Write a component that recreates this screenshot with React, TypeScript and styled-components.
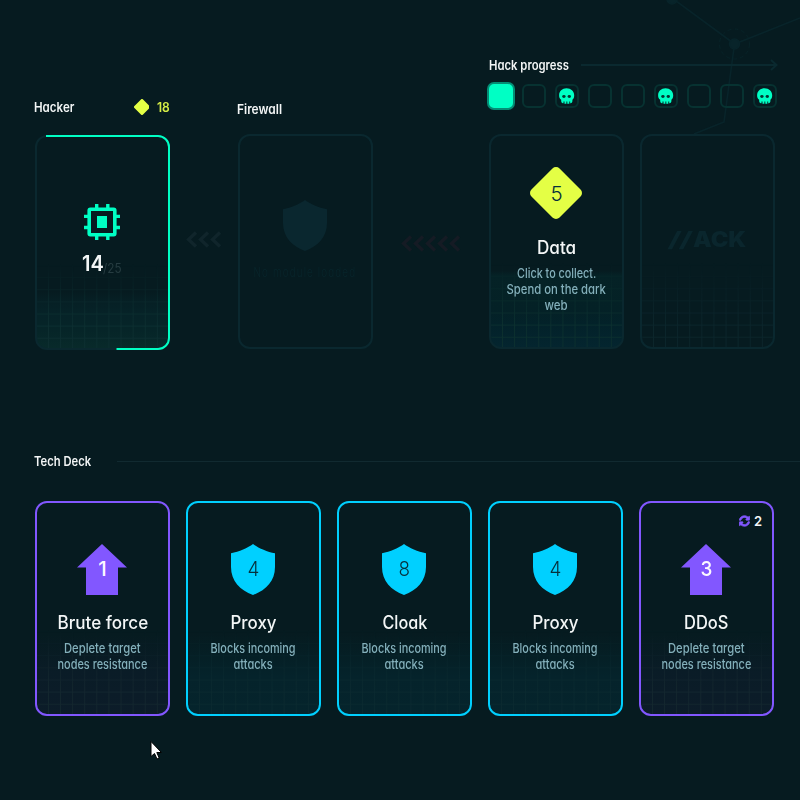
import React, { useLayoutEffect, useRef, useState } from "react";
import styled, { createGlobalStyle, css } from "styled-components";

const color = {
  bg: "#061b20",
  line: "#0a282f",
  green: "#00ffc4",
  violet: "#8257ff",
  cyan: "#00d0ff",
  lime: "#e4ff45",
  text: "#f3f6f6",
  muted: "#84b0bb",
};

const GlobalStyle = createGlobalStyle`
  *, *::before, *::after { box-sizing: border-box; }
  body { margin: 0; background: ${color.bg}; overflow: hidden; }
`;

const Screen = styled.main`
  position: relative;
  width: 800px;
  height: 800px;
  overflow: hidden;
  background: ${color.bg};
  color: ${color.text};
  font-family: Inter, Roboto, sans-serif;
  font-feature-settings: "cv11" 1;
  font-weight: 600;
  font-size: 13px;
  line-height: 16px;
`;

/* ---------- condensed text ---------- */

const Line = styled.span<{ $origin: string }>`
  display: inline-block;
  flex: none;
  white-space: nowrap;
  transform-origin: ${(p) => p.$origin} center;
`;

function Fit({ w, origin = "left", children }: { w: number; origin?: string; children: React.ReactNode }) {
  const ref = useRef<HTMLSpanElement>(null);
  const [scale, setScale] = useState(1);
  useLayoutEffect(() => {
    if (ref.current) setScale(w / ref.current.offsetWidth);
  }, [w]);
  return (
    <Line ref={ref} $origin={origin} style={{ transform: `scaleX(${scale})` }}>
      {children}
    </Line>
  );
}

/* ---------- layout ---------- */

const Network = styled.svg`
  position: absolute;
  top: 0;
  right: 0;
`;

const Arena = styled.section`
  position: relative;
  display: flex;
  align-items: flex-end;
  height: 350px;
  padding-left: 35px;
`;

const Slot = styled.div<{ $lift?: number }>`
  display: flex;
  flex-direction: column;
  width: 135px;
  flex: none;
  margin-bottom: ${(p) => p.$lift ?? 0}px;
`;

const SlotHeader = styled.div<{ $gap: number }>`
  display: flex;
  align-items: center;
  height: 16px;
  margin-left: -1px;
  margin-bottom: ${(p) => p.$gap}px;
`;

const Credits = styled.div`
  display: flex;
  align-items: center;
  gap: 8px;
  width: 37px;
  margin-left: auto;
  margin-right: -1px;
  color: #d5ed46;
`;

const Flow = styled.div<{ $width: number; $bottom: number; $left: number }>`
  display: flex;
  flex: none;
  width: ${(p) => p.$width}px;
  padding-left: ${(p) => p.$left}px;
  margin-bottom: ${(p) => p.$bottom}px;
`;

const Target = styled.div`
  display: flex;
  flex-direction: column;
  width: 290px;
  margin-bottom: 1px;
`;

const ProgressHeader = styled.div`
  display: flex;
  align-items: center;
  justify-content: space-between;
  height: 16px;
  margin-bottom: 11px;
`;

const Steps = styled.div`
  display: flex;
  gap: 9px;
  margin-bottom: 26px;
`;

const Step = styled.div<{ $active?: boolean }>`
  display: flex;
  align-items: center;
  justify-content: center;
  flex: none;
  width: 24px;
  height: 24px;
  border-radius: 6px;
  border: 2px solid #073231;
  ${(p) =>
    p.$active &&
    css`
      background: ${color.green};
      border-color: ${color.green};
      border-radius: 5px;
      box-shadow: 0 0 0 2px #048d75;
    `}
`;

const CardRow = styled.div`
  display: flex;
  gap: 16px;
`;

/* ---------- cards ---------- */

type Tone = "green" | "teal" | "dim" | "violet" | "cyan" | "none";

const toneBorder: Record<Tone, string> = {
  green: color.line,
  teal: color.line,
  dim: color.line,
  none: color.line,
  violet: color.violet,
  cyan: color.cyan,
};

const toneFill: Record<Tone, string> = {
  green: "linear-gradient(transparent 73%, #061f24 77%, #062328 84%, #062528 92%, #082a2a)",
  teal: "linear-gradient(transparent 64%, #052226 66%, #042126 82%, #03222a 90%, #04252f)",
  dim: "none",
  none: "none",
  violet: "linear-gradient(transparent 62%, #0a1c27 80%, #0c1c29)",
  cyan: "linear-gradient(transparent 62%, #051f25 72%, #05232b 82%, #05242c)",
};

const toneGrid: Record<Tone, string> = {
  green: "#0d2f31",
  teal: "#0c302f",
  dim: "#0c262c",
  none: "transparent",
  violet: "#14272f",
  cyan: "#0b2a30",
};

const Card = styled.article<{ $tone: Tone; $top: number }>`
  position: relative;
  display: flex;
  flex-direction: column;
  align-items: center;
  flex: none;
  width: 135px;
  height: 215px;
  padding-top: ${(p) => p.$top - 2}px;
  padding-right: 1px;
  border: 2px solid ${(p) => toneBorder[p.$tone]};
  border-radius: 12px;
  background: ${(p) => toneFill[p.$tone]};
  &::before {
    content: "";
    position: absolute;
    inset: auto 0 0 0;
    height: 84px;
    border-radius: 0 0 10px 10px;
    background-image: linear-gradient(to right, ${(p) => toneGrid[p.$tone]} 1px, transparent 1px),
      linear-gradient(to top, ${(p) => toneGrid[p.$tone]} 1px, transparent 1px);
    background-size: 12.1px 12.1px;
    background-position: 11px 0, 0 -10px;
    mask-image: linear-gradient(transparent, #000 75%);
  }
  & > * {
    position: relative;
  }
`;

const Emblem = styled.div<{ $dark?: boolean; $height: number; $drop?: number }>`
  display: grid;
  place-items: center;
  height: ${(p) => p.$height}px;
  font-size: 20.5px;
  font-weight: ${(p) => (p.$dark ? 300 : 500)};
  line-height: 22px;
  color: ${(p) => (p.$dark ? "#06303c" : "#fbf8ff")};
  & > * {
    grid-area: 1 / 1;
  }
  & > span {
    margin-top: ${(p) => p.$drop ?? -1}px;
    margin-left: 1px;
  }
`;

const Title = styled.h3`
  margin: 16px 0 0 1px;
  font-size: 18px;
  font-weight: 500;
  line-height: 24px;
  display: flex;
  justify-content: center;
`;

const Desc = styled.p`
  display: flex;
  flex-direction: column;
  align-items: center;
  margin: 5px 0 0 1px;
  color: ${color.muted};
  font-weight: 500;
`;

const Health = styled.div`
  display: flex;
  align-items: baseline;
  width: 41px;
  margin-top: 12px;
  font-size: 21px;
  line-height: 24px;
`;

const HealthNow = styled.span`
  width: 21px;
`;

const HealthMax = styled.span`
  width: 19px;
  color: #263c41;
  font-size: 13px;
  font-weight: 400;
  transform: translateY(2px);
`;

const Empty = styled.p`
  display: flex;
  justify-content: center;
  margin: 13px 0 0;
  color: #08252b;
  font-weight: 300;
  letter-spacing: 1.5px;
`;

const Logo = styled.div`
  display: flex;
  align-items: center;
  width: 76px;
  height: 24px;
  color: #0a262d;
  font-size: 21px;
  font-weight: 900;
`;

const Slashes = styled.span`
  width: 24px;
  transform: skewX(-10deg);
`;

const HealthRing = styled.svg`
  && {
    position: absolute;
    top: -2px;
    left: -2px;
  }
`;

const Charges = styled.div`
  && {
    position: absolute;
    top: 10px;
    right: 10px;
    display: flex;
    align-items: center;
    gap: 4px;
    width: 23px;
    height: 16px;
  }
`;

/* ---------- tech deck ---------- */

const Deck = styled.section`
  position: relative;
  margin-top: 103px;
  padding-left: 35px;
`;

const DeckHeader = styled.div`
  display: flex;
  align-items: center;
  height: 16px;
  margin-left: -1px;
  margin-bottom: 32px;
`;

const HeaderText = styled.div<{ $width: number }>`
  display: flex;
  flex: none;
  width: ${(p) => p.$width}px;
`;

const Rule = styled.div`
  flex: 1;
  height: 1px;
  background: #112a30;
`;

const Cursor = styled.svg`
  position: absolute;
  left: 150px;
  top: 741px;
`;

/* ---------- drawings ---------- */

const Shield = ({ fill }: { fill: string }) => (
  <svg width="44" height="51" viewBox="0 0 44 51" fill={fill}>
    <path d="M22 0C27 3.8 36 7.8 44 9.3V23C44 37 35 46.3 22 51C9 46.3 0 37 0 23V9.3C8 7.8 17 3.8 22 0Z" />
  </svg>
);

const UpArrow = () => (
  <svg width="50" height="51" viewBox="0 0 50 51" fill={color.violet}>
    <path d="M25 0L50 23.5H41V51H9V23.5H0Z" />
  </svg>
);

const Diamond = ({ size, r }: { size: number; r: number }) => {
  const side = (size + 2 * r * 0.414) / Math.SQRT2;
  return (
    <svg width={size} height={size} fill={color.lime}>
      <rect
        x={(size - side) / 2}
        y={(size - side) / 2}
        width={side}
        height={side}
        rx={r}
        transform={`rotate(45 ${size / 2} ${size / 2})`}
      />
    </svg>
  );
};

const Chip = () => (
  <svg width="36" height="36" viewBox="0 0 36 36" fill={color.green}>
    <path
      fillRule="evenodd"
      d="M11 0h3.4v3.4h7.7V0h3.4v3.4h4.1a3 3 0 0 1 3 3v4.3H36v3.4h-3.4v7.7H36v3.4h-3.4v4.4a3 3 0 0 1-3 3h-4.1V36h-3.4v-3.4h-7.7V36H11v-3.4H6.4a3 3 0 0 1-3-3v-4.4H0v-3.4h3.4v-7.7H0v-3.4h3.4V6.4a3 3 0 0 1 3-3H11ZM7 7v22h22V7Z"
    />
    <path d="M13 12h10v12H13Z" />
  </svg>
);

const Skull = () => (
  <svg width="16" height="16" viewBox="0 0 16 16">
    <path
      fill={color.green}
      d="M7.5 0.3C12 0.3 15.2 3.3 15.2 7.4C15.2 9.3 14.6 10.8 13.4 11.8V13.2Q13.4 14.8 11.8 15.2H11.2V13.4H10.3V15.7H8.3V13.4H7.4V15.7H5.5V13.4H4.5V15.2H3.7Q2.2 14.8 2.2 13.2V11.8C0.7 10.8 0.1 9.3 0.1 7.4C0.1 3.3 3.2 0.3 7.5 0.3Z"
    />
    <ellipse cx="4.9" cy="8.500" rx="1.7" ry="1.4" fill="#03352f" />
    <ellipse cx="10.3" cy="8.500" rx="1.7" ry="1.4" fill="#03352f" />
  </svg>
);

const Chevrons = ({ count, stroke }: { count: number; stroke: string }) => (
  <svg width={count * 12} height="18" fill="none" stroke={stroke} strokeWidth="3.4">
    {Array.from({ length: count }, (_, i) => (
      <path key={i} d={`M${i * 12 + 10} 1.5L${i * 12 + 2.6} 8.5L${i * 12 + 10} 15.5`} />
    ))}
  </svg>
);

const Sync = () => (
  <svg width="12" height="12" viewBox="0 0 512 512" fill={color.violet} stroke={color.violet} strokeWidth="36">
    <path d="M370.7 133.3C339.5 104 298.9 88 255.8 88c-77.5.1-144.3 53.2-162.8 126.9-1.3 5.4-6.1 9.2-11.7 9.2H24.1c-7.5 0-13.2-6.8-11.8-14.2C33.9 94.9 134.8 8 256 8c66.4 0 126.8 26.1 171.3 68.7L463 41C478.1 25.9 504 36.6 504 57.9V192c0 13.3-10.7 24-24 24H345.9c-21.4 0-32.1-25.9-17-41l41.8-41.7zM32 296h134.1c21.4 0 32.1 25.9 17 41l-41.8 41.8c31.3 29.3 71.8 45.3 114.9 45.3 77.4-.1 144.3-53.1 162.8-126.8 1.3-5.4 6.1-9.2 11.7-9.2h57.3c7.5 0 13.2 6.8 11.8 14.2C478.1 417.1 377.2 504 256 504c-66.4 0-126.8-26.1-171.3-68.7L49 471c-15.1 15.1-41 4.4-41-16.9V320c0-13.3 10.7-24 24-24z" />
  </svg>
);

/* ---------- data ---------- */

type Tech = {
  kind: "attack" | "defend";
  power: number;
  name: string;
  nameWidth: number;
  desc: [string, number][];
  charges?: number;
};

const attackDesc: [string, number][] = [["Deplete target", 77], ["nodes resistance", 90]];
const defendDesc: [string, number][] = [["Blocks incoming", 85], ["attacks", 39]];

const deck: Tech[] = [
  { kind: "attack", power: 1, name: "Brute force", nameWidth: 91, desc: attackDesc },
  { kind: "defend", power: 4, name: "Proxy", nameWidth: 46, desc: defendDesc },
  { kind: "defend", power: 8, name: "Cloak", nameWidth: 45, desc: defendDesc },
  { kind: "defend", power: 4, name: "Proxy", nameWidth: 46, desc: defendDesc },
  { kind: "attack", power: 3, name: "DDoS", nameWidth: 44, desc: attackDesc, charges: 2 },
];

const steps = ["active", "", "skull", "", "", "skull", "", "", "skull"];

function TechCard({ tech }: { tech: Tech }) {
  const attack = tech.kind === "attack";
  return (
    <Card $tone={attack ? "violet" : "cyan"} $top={43}>
      {tech.charges && (
        <Charges>
          <Sync />
          <Fit w={8}>{tech.charges}</Fit>
        </Charges>
      )}
      <Emblem $dark={!attack} $height={51}>
        {attack ? <UpArrow /> : <Shield fill={color.cyan} />}
        <Fit w={tech.power === 1 ? 9 : 12} origin="center">{tech.power}</Fit>
      </Emblem>
      <Title>
        <Fit w={tech.nameWidth} origin="center">{tech.name}</Fit>
      </Title>
      <Desc>
        {tech.desc.map(([line, w]) => (
          <Fit key={line} w={w} origin="center">{line}</Fit>
        ))}
      </Desc>
    </Card>
  );
}

export default function App() {
  return (
    <Screen>
      <GlobalStyle />
      <Network width="140" height="165" fill="none" stroke="#08242a" strokeWidth="1.6">
        <path d="M12 -2L74.5 44L140 18M74.5 44L64 122L34 134" />
        <circle cx="74.5" cy="44" r="5" fill="#08242a" />
        <circle cx="12" cy="-1" r="5" fill="#08242a" />
        <circle cx="74.5" cy="44" r="15" strokeWidth="0.8" strokeDasharray="4 3" />
      </Network>

      <Arena>
        <Slot>
          <SlotHeader $gap={20}>
            <Fit w={40}>Hacker</Fit>
            <Credits>
              <Diamond size={16} r={1.5} />
              <Fit w={13}>18</Fit>
            </Credits>
          </SlotHeader>
          <Card $tone="green" $top={69}>
            <HealthRing width="135" height="215" fill="none" stroke={color.green} strokeWidth="2">
              <path d="M11 1H123A11 11 0 0 1 134 12V203A11 11 0 0 1 123 214H81.5" />
            </HealthRing>
            <Chip />
            <Health>
              <HealthNow><Fit w={22}>14</Fit></HealthNow>
              <HealthMax><Fit w={19}>/25</Fit></HealthMax>
            </Health>
          </Card>
        </Slot>

        <Flow $width={68} $left={16} $bottom={101}>
          <Chevrons count={3} stroke="#10252b" />
        </Flow>

        <Slot $lift={1}>
          <SlotHeader $gap={17}>
            <Fit w={45}>Firewall</Fit>
          </SlotHeader>
          <Card $tone="none" $top={66}>
            <Shield fill="#0a272f" />
            <Empty>
              <Fit w={103} origin="center">No module loaded</Fit>
            </Empty>
          </Card>
        </Slot>

        <Flow $width={116} $left={28} $bottom={97}>
          <Chevrons count={5} stroke="#151b24" />
        </Flow>

        <Target>
          <ProgressHeader>
            <Fit w={80}>Hack progress</Fit>
            <svg width="198" height="12" fill="none" stroke="#0a292f" strokeWidth="2">
              <path d="M0 6H196M190 1L195.5 6L190 11" />
            </svg>
          </ProgressHeader>
          <Steps>
            {steps.map((s, i) => (
              <Step key={i} $active={s === "active"}>{s === "skull" && <Skull />}</Step>
            ))}
          </Steps>
          <CardRow>
            <Card $tone="teal" $top={32}>
              <Emblem $dark $height={54} $drop={2}>
                <Diamond size={52} r={5} />
                <Fit w={12} origin="center">5</Fit>
              </Emblem>
              <Title>
                <Fit w={39} origin="center">Data</Fit>
              </Title>
              <Desc>
                <Fit w={79} origin="center">Click to collect.</Fit>
                <Fit w={99} origin="center">Spend on the dark</Fit>
                <Fit w={23} origin="center">web</Fit>
              </Desc>
            </Card>
            <Card $tone="dim" $top={94}>
              <Logo>
                <Slashes><Fit w={22}>//</Fit></Slashes>
                <Fit w={53}>ACK</Fit>
              </Logo>
            </Card>
          </CardRow>
        </Target>
      </Arena>

      <Deck>
        <DeckHeader>
          <HeaderText $width={83}>
            <Fit w={57}>Tech Deck</Fit>
          </HeaderText>
          <Rule />
        </DeckHeader>
        <CardRow>
          {deck.map((tech, i) => (
            <TechCard key={i} tech={tech} />
          ))}
        </CardRow>
      </Deck>

      <Cursor width="13" height="20">
        <path d="M1 0.5V15.5L4.5 12.5L7 18L9.2 17L6.8 11.5H11.5Z" fill="#fff" stroke="#000" strokeWidth="1" />
      </Cursor>
    </Screen>
  );
}
